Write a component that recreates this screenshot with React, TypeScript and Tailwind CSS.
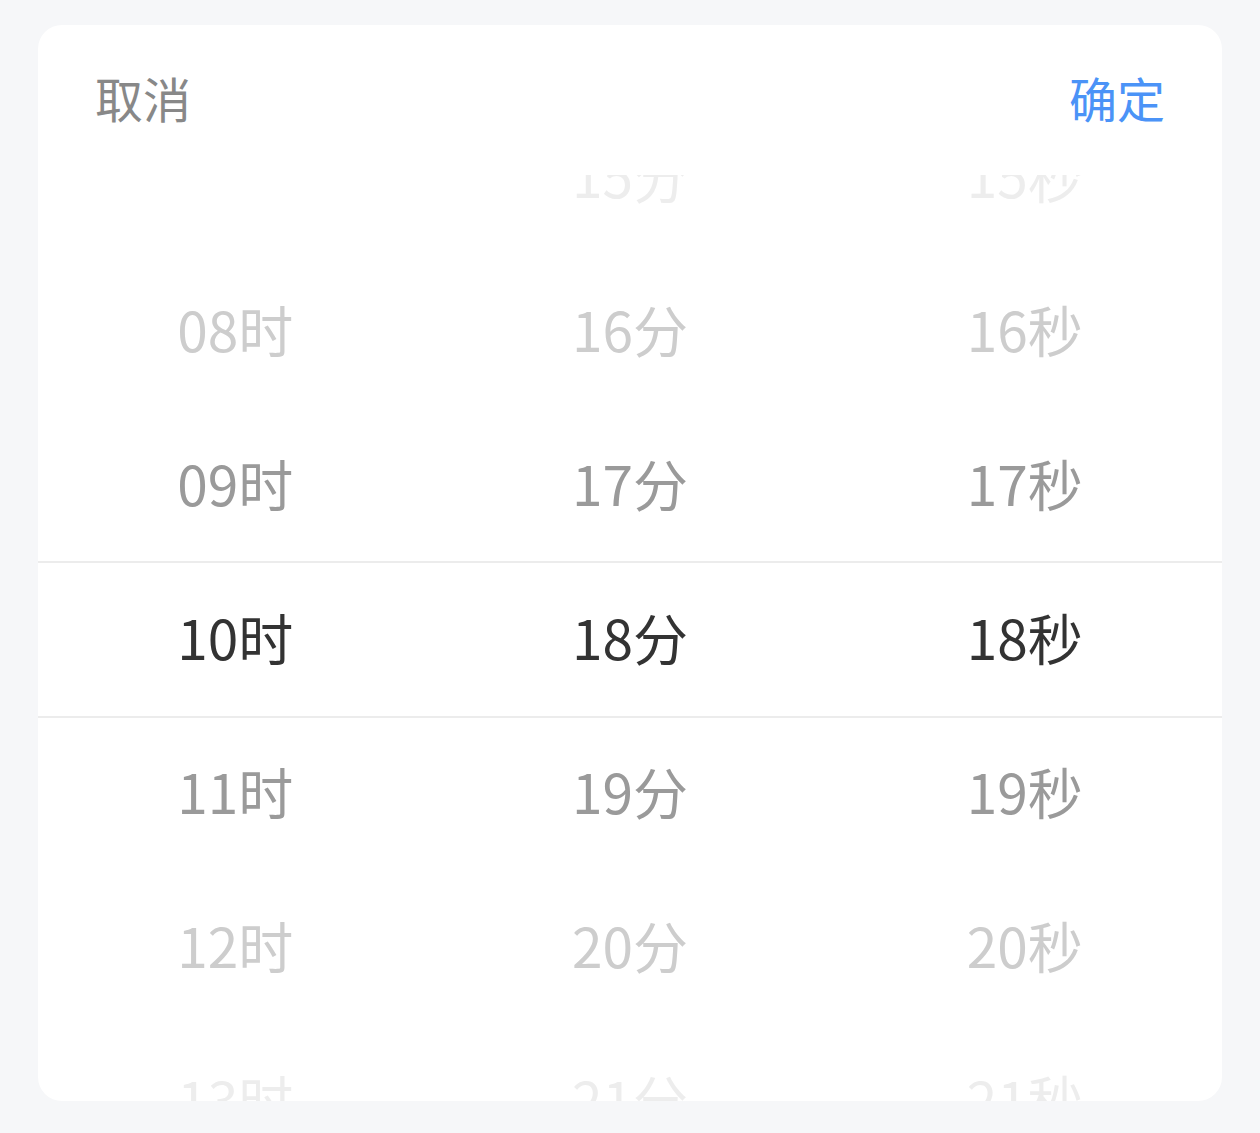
const columns = [
  { unit: "时", values: [null, 8, 9, 10, 11, 12, 13] },
  { unit: "分", values: [15, 16, 17, 18, 19, 20, 21] },
  { unit: "秒", values: [15, 16, 17, 18, 19, 20, 21] },
];

const shades = ["text-[#333333]", "text-[#9a9a9a]", "text-[#cdcdcd]", "text-[#ededed]"];

const pad = (n: number) => (n < 10 ? "0" + n : String(n));

const App = () => {
  return (
    <div
      className="min-h-screen bg-[#f6f7f9] pt-[25px] px-[38px]"
      style={{ fontFamily: '"Noto Sans CJK SC", "Noto Sans", sans-serif' }}
    >
      <div className="bg-white rounded-[24px] overflow-hidden h-[1076px] flex flex-col">
        <div className="h-[150px] shrink-0 flex items-center justify-between px-[57px] pb-[7px] text-[48px] leading-none">
          <span className="text-[#888888]">取消</span>
          <span className="text-[#4b93f7]">确定</span>
        </div>

        <div className="relative flex-1 overflow-hidden">
          <div className="grid grid-cols-3 -mt-[78px]">
            {columns.map((col, ci) => (
              <div key={ci} className="flex flex-col">
                {col.values.map((v, i) => (
                  <div
                    key={i}
                    className={`h-[154px] flex items-center justify-center text-[55px] leading-none ${shades[Math.abs(i - 3)]}`}
                  >
                    {v === null ? "" : pad(v) + col.unit}
                  </div>
                ))}
              </div>
            ))}
          </div>
          <div className="absolute left-0 right-0 top-[386px] h-[157px] border-y-2 border-[#ececec] pointer-events-none" />
        </div>
      </div>
    </div>
  );
};

export default App;
